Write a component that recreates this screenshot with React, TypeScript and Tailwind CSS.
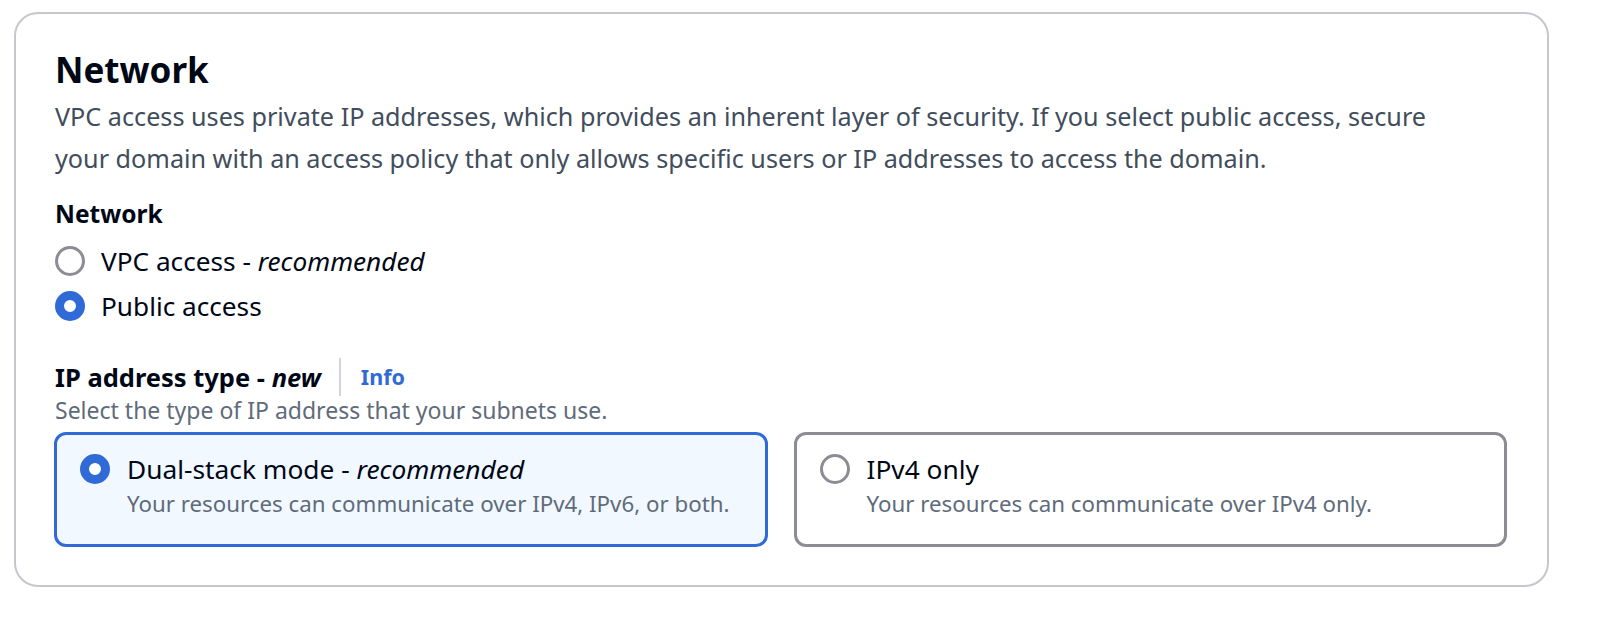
import React from 'react';

const font = { fontFamily: '"Noto Sans", "Open Sans", Arial, sans-serif' };

function Radio({ checked }: { checked: boolean }) {
  return checked ? (
    <span className="w-[30px] h-[30px] rounded-full border-[9px] border-[#2f6ad6] bg-white shrink-0" />
  ) : (
    <span className="w-[30px] h-[30px] rounded-full border-[3px] border-[#8c8c94] bg-white shrink-0" />
  );
}

function Tile({
  checked,
  title,
  italic,
  desc,
}: {
  checked: boolean;
  title: string;
  italic?: string;
  desc: string;
}) {
  return (
    <div
      className={`flex-1 h-[115px] rounded-[12px] border-[3px] pl-[23px] pt-[18px] ${
        checked ? 'border-[#2f6ad6] bg-[#f1f8ff]' : 'border-[#8c8c94] bg-white'
      }`}
    >
      <div className="flex items-center gap-[17px] h-[32px]">
        <Radio checked={checked} />
        <span className="text-[26.3px] leading-[32px] text-[#000716] whitespace-nowrap">
          {title}
          {italic && <em> {italic}</em>}
        </span>
      </div>
      <div className="mt-[2px] pl-[47px] text-[22.3px] leading-[34px] text-[#5f6b7a] whitespace-nowrap">{desc}</div>
    </div>
  );
}

export default function App() {
  return (
    <div className="bg-white w-[1600px] h-[617px] pt-[12px] pl-[14px]" style={font}>
      <div className="w-[1535px] h-[575px] rounded-[24px] border-2 border-[#c6c6cd] pl-[39px] pr-[40px] pt-[34px]">
        <h2 className="text-[35px] leading-[44px] font-bold text-[#000716]">Network</h2>
        <p className="mt-[3px] text-[25.2px] leading-[42px] text-[#414d5c] whitespace-nowrap">
          VPC access uses private IP addresses, which provides an inherent layer of security. If you select public access, secure
          <br />
          your domain with an access policy that only allows specific users or IP addresses to access the domain.
        </p>

        <div className="mt-[19px] text-[24.5px] leading-[32px] font-bold text-[#000716]">Network</div>
        <div className="mt-[15px] flex flex-col gap-[13px]">
          <label className="flex items-center gap-[16px] h-[32px] text-[26.2px] leading-[32px] text-[#000716]">
            <Radio checked={false} />
            <span>
              VPC access - <em>recommended</em>
            </span>
          </label>
          <label className="flex items-center gap-[16px] h-[32px] text-[26.2px] leading-[32px] text-[#000716]">
            <Radio checked />
            <span>Public access</span>
          </label>
        </div>

        <div className="mt-[36px] flex items-center h-[38px]">
          <span className="text-[25.5px] leading-[38px] font-bold text-[#000716]">
            IP address type - <em>new</em>
          </span>
          <span className="ml-[18px] w-[2px] h-[38px] bg-[#d1d5db]" />
          <span className="ml-[20px] text-[21.5px] leading-[38px] font-bold text-[#2f6ad6]">Info</span>
        </div>
        <div className="text-[23px] leading-[28px] text-[#5f6b7a]">
          Select the type of IP address that your subnets use.
        </div>

        <div className="mt-[8px] flex gap-[26px] w-[1453px] -ml-[1px]">
          <Tile
            checked
            title="Dual-stack mode -"
            italic="recommended"
            desc="Your resources can communicate over IPv4, IPv6, or both."
          />
          <Tile checked={false} title="IPv4 only" desc="Your resources can communicate over IPv4 only." />
        </div>
      </div>
    </div>
  );
}
